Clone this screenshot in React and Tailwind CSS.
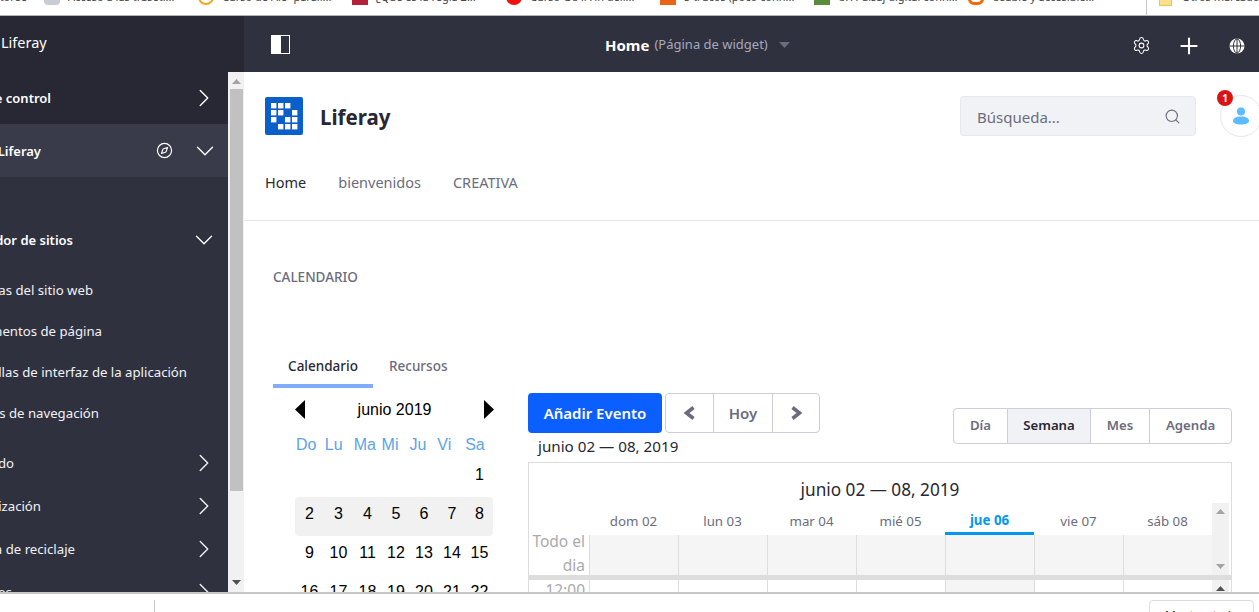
import React from "react";
import { ChevronDown, ChevronRight, Compass, Plus, Search, Settings } from "lucide-react";

const bookmarks = [
  { text: "Acceso a las traseti...", icon: "bg-[#c8ccd4] rounded-sm" },
  { text: "Curso de Ale- paralí...", icon: "border-2 border-[#f5a623] rounded-full" },
  { text: "¿Qué es la regla 2...", icon: "bg-[#b5203a]" },
  { text: "Curso GUTA in deli...", icon: "bg-[#f01010] rounded-full" },
  { text: "5 trucos (poco conn...", icon: "bg-[#e8651a]" },
  { text: "UX Paisaj digital conn...", icon: "bg-[#5a8a3c]" },
  { text: "Usable y accesible...", icon: "border-[3px] border-[#f26a10] rounded-md" },
];

const siteItems = [
  { text: "Páginas del sitio web", w: "w-[93px]" },
  { text: "Fragmentos de página", w: "w-[102px]" },
  { text: "Plantillas de interfaz de la aplicación", w: "w-[187px]" },
  { text: "Menús de navegación", w: "w-[99px]" },
];

const groups = [
  { text: "Contenido", w: "w-[14px]" },
  { text: "Categorización", w: "w-[41px]" },
  { text: "Papelera de reciclaje", w: "w-[75px]" },
  { text: "Miembros", w: "w-[12px]" },
];

const days = ["dom 02", "lun 03", "mar 04", "mié 05", "jue 06", "vie 07", "sáb 08"];
const dayHeads = [
  { text: "Do", w: "w-[29px]" },
  { text: "Lu", w: "w-[29px]" },
  { text: "Ma", w: "w-[28px]" },
  { text: "Mi", w: "w-[28px]" },
  { text: "Ju", w: "w-[28px]" },
  { text: "Vi", w: "w-[28px]" },
  { text: "Sa", w: "w-[28px]" },
];
const weeks = [
  ["", "", "", "", "", "", "1"],
  ["2", "3", "4", "5", "6", "7", "8"],
  ["9", "10", "11", "12", "13", "14", "15"],
  ["16", "17", "18", "19", "20", "21", "22"],
];

function Clipped({ text, w, className = "" }) {
  // the sidebar is scrolled off to the left, only the end of each label shows
  return (
    <span className={`${w} flex shrink-0 justify-end overflow-hidden whitespace-nowrap ${className}`}>
      {text}
    </span>
  );
}

function Triangle({ dir, color = "#a3a3a3" }) {
  const points = dir === "up" ? "0,5 4.5,0 9,5" : "0,0 9,0 4.5,5";
  return (
    <svg width="9" height="5" viewBox="0 0 9 5">
      <polygon points={points} fill={color} />
    </svg>
  );
}

function Sidebar() {
  return (
    <aside className="flex w-[244px] shrink-0 flex-col overflow-hidden">
      <div className="flex h-[56px] shrink-0 items-center bg-[#272833] pb-[2px] pl-px text-[14.5px] text-white">
        Liferay
      </div>
      <div className="flex min-h-0 flex-1">
        <div className="w-[228px] shrink-0 overflow-hidden bg-[#30313f] text-[13.2px] text-[#f1f2f5]">
          <div className="flex h-[52px] items-center justify-between bg-[#272833] pr-[9px] text-[13px] font-semibold text-white">
            <Clipped text="Panel de control" w="w-[51px]" className="pt-[2px]" />
            <ChevronRight size={30} strokeWidth={1.1} />
          </div>
          <div className="flex h-[53px] items-center justify-between bg-[#393a4a] pr-[8px] text-[13px] font-semibold text-white">
            <Clipped text="Liferay" w="w-[41px]" className="pt-[2px]" />
            <div className="flex items-center gap-[17px]">
              <Compass size={17} strokeWidth={1.7} />
              <ChevronDown size={30} strokeWidth={1.1} />
            </div>
          </div>
          <div className="mt-[41px] flex h-[43px] items-center justify-between pr-[9px] text-[13px] font-semibold text-white">
            <Clipped text="Creador de sitios" w="w-[73px]" className="pt-[2px]" />
            <ChevronDown size={30} strokeWidth={1.1} />
          </div>
          <div className="mt-[8px] flex flex-col">
            {siteItems.map((item) => (
              <div key={item.text} className="flex h-[41px] items-center">
                <Clipped text={item.text} w={item.w} className="pt-[2px]" />
              </div>
            ))}
          </div>
          <div className="mt-[8px] flex flex-col">
            {groups.map((item) => (
              <div key={item.text} className="flex h-[43px] shrink-0 items-center justify-between pr-[9px]">
                <Clipped text={item.text} w={item.w} className="pt-[2px]" />
                <ChevronRight size={30} strokeWidth={1.1} />
              </div>
            ))}
          </div>
        </div>
        <div className="flex w-[16px] shrink-0 flex-col items-center bg-[#f1f1f1] pt-[7px] pb-[7px]">
          <Triangle dir="up" />
          <div className="mt-[5px] h-[402px] w-[13px] bg-[#c1c1c1]" />
          <div className="flex-1" />
          <Triangle dir="down" color="#505050" />
        </div>
      </div>
    </aside>
  );
}

function TopBar() {
  return (
    <div className="flex h-[56px] shrink-0 items-center bg-[#30313f] pr-[14px] pl-[27px] text-white">
      <div className="flex h-[19px] w-[19px] border border-white">
        <div className="w-1/2 bg-white" />
      </div>
      <div className="mt-[2px] ml-[315px] flex items-center text-[13px]">
        <span className="text-[15px] font-bold">Home</span>
        <span className="ml-[5px] text-[#a7a9bc]">(Página de widget)</span>
        <svg className="ml-[11px]" width="11" height="6" viewBox="0 0 11 6">
          <polygon points="0,0 11,0 5.5,6" fill="#6b6c7e" />
        </svg>
      </div>
      <div className="mt-[3px] ml-auto flex items-center">
        <Settings size={19} strokeWidth={1.3} />
        <Plus className="ml-[25px]" size={26} strokeWidth={1.9} />
        <svg className="ml-[27px]" width="16" height="16" viewBox="0 0 16 16">
          <circle cx="8" cy="8" r="7.5" fill="white" />
          <ellipse cx="8" cy="8" rx="3.6" ry="7" fill="none" stroke="#30313f" strokeWidth="1" />
          <path d="M0.5 8H15.5M8 0.5V15.500" stroke="#30313f" strokeWidth="1" />
        </svg>
      </div>
    </div>
  );
}

function LogoMark() {
  const cells = [
    [0, 0], [1, 0], [2, 0],
    [0, 1], [1, 1], [3, 1],
    [0, 2], [2, 2], [3, 2],
    [1, 3], [2, 3], [3, 3],
  ];
  return (
    <svg width="38" height="38" viewBox="0 0 38 38" className="shrink-0">
      <rect width="38" height="38" rx="2" fill="#0b5fcb" />
      {cells.map(([x, y]) => (
        <rect key={`${x}-${y}`} x={6 + x * 7} y={6 + y * 7} width="5.4" height="5.4" fill="white" />
      ))}
    </svg>
  );
}

function SiteHeader() {
  return (
    <header className="h-[149px] shrink-0 border-b border-[#e7e7ed] pl-[21px]">
      <div className="flex items-center pt-[23px]">
        <LogoMark />
        <span className="ml-[17px] w-[70px] shrink-0 pt-[2px] text-[20.5px] font-bold text-[#272833]">Liferay</span>
        <div className="ml-[570px] flex h-[40px] w-[236px] shrink-0 items-center justify-between rounded border border-[#e7e7ed] bg-[#f1f2f5] pr-[14px] pl-[16px] text-[15px] text-[#6b6c7e]">
          <span className="pt-[2px]">Búsqueda...</span>
          <Search size={17} strokeWidth={1.6} />
        </div>
        <div className="relative ml-[24px] flex h-[42px] w-[42px] shrink-0 items-center justify-center rounded-full border border-[#e7e7ed]">
          <span className="absolute top-[-6px] left-[-4px] flex h-[16px] w-[16px] items-center justify-center rounded-full bg-[#da1414] text-[10px] font-bold text-white">
            1
          </span>
          <svg width="16" height="18" viewBox="0 0 16 18">
            <circle cx="8" cy="4.5" r="4" fill="#5cbcff" />
            <path d="M0 14c0-3 3-4.5 8-4.5s8 1.500 8 4.500c0 2-3 3.500-8 3.500s-8-1.500-8-3.500z" fill="#5cbcff" />
          </svg>
        </div>
      </div>
      <nav className="mt-[35px] flex items-center gap-[32px] text-[14.5px] text-[#6b6c7e]">
        <span className="text-[#272833]">Home</span>
        <span>bienvenidos</span>
        <span>CREATIVA</span>
      </nav>
    </header>
  );
}

function MiniCalendar() {
  return (
    <div className="w-[255px] shrink-0 font-['Liberation_Sans',sans-serif]">
      <div className="flex h-[20px] w-[199px] items-center justify-between">
        <svg width="10" height="19" viewBox="0 0 10 19">
          <polygon points="10,0 10,19 0,9.500" fill="black" />
        </svg>
        <span className="pt-[2px] text-[16px] text-black">junio 2019</span>
        <svg width="10" height="19" viewBox="0 0 10 19">
          <polygon points="0,0 0,19 10,9.500" fill="black" />
        </svg>
      </div>
      <div className="mt-[16px] flex h-[20px] w-[198px] items-center pl-px text-[16px] text-[#5ba4e8]">
        {dayHeads.map((d) => (
          <span key={d.text} className={d.w}>
            {d.text}
          </span>
        ))}
      </div>
      <div className="mt-[3px] flex w-[198px] flex-col text-[16px] text-black">
        {weeks.map((week, i) => (
          <div
            key={i}
            className={`grid h-[39px] shrink-0 grid-cols-[29px_29px_29px_28px_28px_28px_27px] items-center pb-[6px] text-center ${i === 1 ? "rounded-sm bg-[#f1f1f1]" : ""}`}
          >
            {week.map((n, j) => (
              <span key={j}>{n}</span>
            ))}
          </div>
        ))}
      </div>
    </div>
  );
}

function WeekGrid() {
  return (
    <div className="mt-[6px] w-[704px] border border-b-0 border-[#dddddd]">
      <div className="flex h-[40px] items-end justify-center text-[17.2px] text-[#272833]">
        junio 02 — 08, 2019
      </div>
      <div className="grid grid-cols-[60px_repeat(7,89px)_17px] text-[13.3px] text-[#6b6c7e]">
        <div />
        {days.map((d) => (
          <div
            key={d}
            className={
              d === "jue 06"
                ? "flex h-[32px] items-center justify-center border-b-[3px] border-[#0099ee] pt-[6px] font-bold text-[#0099ee]"
                : "flex h-[32px] items-center justify-center pt-[6px]"
            }
          >
            {d}
          </div>
        ))}
        <div className="row-span-2 flex flex-col items-center justify-between bg-[#f1f1f1] py-[6px]">
          <Triangle dir="up" />
          <Triangle dir="down" />
        </div>
        <div className="h-[40px] pr-[4px] text-right text-[15.5px] leading-[24px] text-[#aaaaaa]">
          <div className="-mt-[6px]">Todo el dia</div>
        </div>
        {days.map((d) => (
          <div key={d} className="h-[40px] border-l border-[#dddddd] bg-[#f5f5f5]" />
        ))}
      </div>
      <div className="h-[5px] bg-[#dddddd]" />
      <div className="grid grid-cols-[60px_repeat(7,89px)_17px]">
        <div className="pr-[4px] text-right text-[15.5px] leading-[20px] text-[#aaaaaa]">12:00</div>
        {days.map((d) => (
          <div key={d} className={d === "jue 06" ? "h-[24px] border-l border-[#dddddd] bg-[#f5f5f5]" : "h-[24px] border-l border-[#dddddd]"} />
        ))}
        <div className="flex justify-center bg-[#f1f1f1] pt-[6px]">
          <Triangle dir="up" color="#505050" />
        </div>
      </div>
    </div>
  );
}

function Scheduler() {
  return (
    <div className="flex-1">
      <div className="flex items-start">
        <div className="flex h-[40px] w-[134px] items-center justify-center rounded bg-[#0b5fff] text-[15px] font-semibold text-white">
          Añadir Evento
        </div>
        <div className="ml-[3px] flex h-[40px] w-[155px] rounded border border-[#cdced9] text-[15px] font-semibold text-[#6b6c7e]">
          <div className="flex w-[47px] items-center justify-center">
            <svg width="13" height="14" viewBox="0 0 13 14">
              <polyline points="10.500,1.500 3.500,7 10.500,12.500" fill="none" stroke="#6b6c7e" strokeWidth="3.6" />
            </svg>
          </div>
          <div className="flex w-[60px] items-center justify-center border-x border-[#cdced9]">Hoy</div>
          <div className="flex flex-1 items-center justify-center">
            <svg width="13" height="14" viewBox="0 0 13 14">
              <polyline points="2.500,1.500 9.500,7 2.500,12.500" fill="none" stroke="#6b6c7e" strokeWidth="3.6" />
            </svg>
          </div>
        </div>
        <div className="mt-[15px] ml-[133px] flex h-[36px] w-[279px] rounded border border-[#cdced9] text-[13.2px] font-semibold text-[#6b6c7e]">
          <div className="flex w-[53px] items-center justify-center">Día</div>
          <div className="flex w-[84px] items-center justify-center border-x border-[#cdced9] bg-[#f1f2f5] text-[#272833]">Semana</div>
          <div className="flex w-[59px] items-center justify-center border-r border-[#cdced9]">Mes</div>
          <div className="flex flex-1 items-center justify-center">Agenda</div>
        </div>
      </div>
      <div className="-mt-[8px] pl-[10px] text-[15.2px] leading-[20px] text-[#272833]">junio 02 — 08, 2019</div>
      <WeekGrid />
    </div>
  );
}

function Calendar() {
  return (
    <section className="min-h-0 flex-1 overflow-hidden pl-[29px]">
      <h2 className="pt-[47px] text-[13.5px] leading-[18px] font-medium text-[#6b6c7e]">CALENDARIO</h2>
      <div className="mt-[60px] flex h-[42px] w-[200px] items-start text-[13.5px] font-medium text-[#6b6c7e]">
        <div className="flex h-[42px] w-[100px] items-center justify-center border-b-4 border-[#80acff] pt-[2px] text-[#272833]">
          Calendario
        </div>
        <div className="flex h-[42px] items-center pb-[2px] pl-[16px]">Recursos</div>
      </div>
      <div className="mt-[5px] flex pl-[22px]">
        <div className="pt-[6px]">
          <MiniCalendar />
        </div>
        <div className="-ml-[22px]">
          <Scheduler />
        </div>
      </div>
    </section>
  );
}

export default function App() {
  return (
    <div className="flex h-[612px] w-[1259px] flex-col overflow-hidden bg-white font-['Noto_Sans',sans-serif]">
      <div className="flex h-[16px] shrink-0 items-start overflow-hidden border-b border-[#b5b5b5] text-[11px] leading-[16px] text-[#444444]">
        <Clipped text="Monitoree" w="w-[27px]" className="-mt-[11px]" />
        <span className="w-[17px] shrink-0" />
        {bookmarks.map((b) => (
          <div key={b.text} className="flex w-[154px] shrink-0 items-start">
            <span className={`-mt-[11px] h-[16px] w-[16px] shrink-0 ${b.icon}`} />
            <span className="-mt-[11px] ml-[8px] whitespace-nowrap">{b.text}</span>
          </div>
        ))}
        <div className="ml-[24px] h-[15px] w-px shrink-0 bg-[#c8c8c8]" />
        <span className="-mt-[8px] ml-[12px] h-[14px] w-[13px] shrink-0 border border-[#e6c65c] bg-[#fbe08a]" />
        <span className="-mt-[11px] ml-[10px] whitespace-nowrap">Otros marcadores</span>
      </div>
      <div className="flex min-h-0 flex-1">
        <Sidebar />
        <main className="flex min-w-0 flex-1 flex-col">
          <TopBar />
          <SiteHeader />
          <Calendar />
        </main>
      </div>
      <div className="flex h-[20px] shrink-0 items-start border-t-2 border-[#c4c4c4] bg-white">
        <div className="mt-[6px] ml-[154px] h-[14px] w-px bg-[#c8c8c8]" />
        <div className="mt-[6px] ml-[994px] h-[24px] w-[105px] rounded border border-[#dadce0] pt-[7px] text-center font-['Liberation_Sans',sans-serif] text-[13px] leading-[16px] text-[#333333]">
          Mostrar todo
        </div>
      </div>
    </div>
  );
}
